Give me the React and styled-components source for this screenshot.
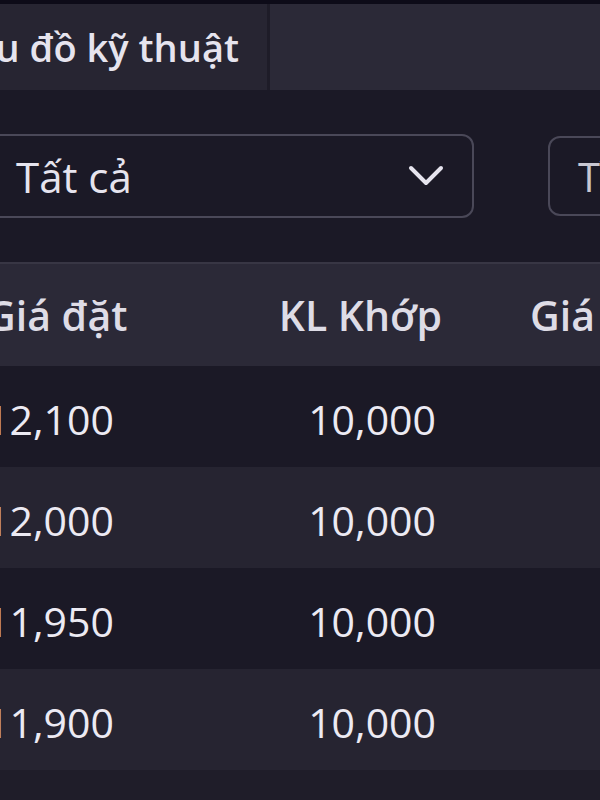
import React from "react";
import styled, { createGlobalStyle } from "styled-components";

const GlobalStyle = createGlobalStyle`
  html, body {
    margin: 0;
    padding: 0;
    background: #1f1d29;
    overflow: hidden;
  }
  * { box-sizing: border-box; }
`;

const Page = styled.div`
  width: 600px;
  height: 800px;
  overflow: hidden;
  background: #1f1d29;
  font-family: "Open Sans", "Noto Sans", sans-serif;
  color: #e9e7f0;
`;

const Shift = styled.div`
  margin-left: -100px;
  width: 780px;
`;

const TabBar = styled.div`
  display: flex;
  height: 90px;
  border-top: 4px solid #0d0b18;
  background: #2b2937;
`;

const Tab = styled.div`
  display: flex;
  align-items: center;
  padding: 0 28px 0 38px;
  font-size: 38px;
  font-weight: 600;
  color: ${(p) => (p.$active ? "#e6e4ee" : "#9d9aab")};
  background: ${(p) => (p.$active ? "#272532" : "transparent")};
  border-right: 3px solid #1e1c28;
  white-space: nowrap;
`;

const FilterBar = styled.div`
  display: flex;
  align-items: center;
  gap: 74px;
  height: 174px;
  padding-left: 80px;
  background: #1b1926;
  border-bottom: 2px solid #383644;
`;

const Select = styled.div`
  display: flex;
  align-items: center;
  justify-content: space-between;
  width: 494px;
  height: 84px;
  padding: 0 28px 0 34px;
  border: 2px solid #4a4858;
  border-radius: 12px;
  font-size: 42px;
  color: #e6e4ee;
  flex: none;
`;

const InputBox = styled.div`
  display: flex;
  align-items: center;
  width: 240px;
  height: 80px;
  padding-left: 28px;
  border: 2px solid #4a4858;
  border-radius: 12px;
  font-size: 40px;
  color: #c9c7d2;
  white-space: nowrap;
  overflow: hidden;
  flex: none;
`;

const Row = styled.div`
  display: grid;
  grid-template-columns: 254px 202px 1fr;
  align-items: center;
  height: ${(p) => (p.$header ? "102px" : "101px")};
  padding-left: 86px;
  background: ${(p) =>
    p.$header ? "#2b2937" : p.$alt ? "#262431" : "#1b1926"};
  font-size: ${(p) => (p.$header ? "41px" : "41px")};
  font-weight: ${(p) => (p.$header ? 600 : 400)};
  color: ${(p) => (p.$header ? "#dedce6" : "#eceaf3")};
  white-space: nowrap;
`;

const Cell = styled.div`
  text-align: ${(p) => (p.$right ? "right" : "left")};
  padding-left: ${(p) => (p.$pad ? `${p.$pad}px` : "0")};
  padding-right: ${(p) => (p.$right && !p.$header ? "6px" : "0")};
  padding-top: ${(p) => (p.$header ? "0" : "4px")};
`;

const Chevron = () => (
  <svg width="36" height="22" viewBox="0 0 36 22" fill="none">
    <polyline
      points="3,3 18,18 33,3"
      stroke="#e6e4ee"
      strokeWidth="4"
      strokeLinecap="round"
      strokeLinejoin="round"
    />
  </svg>
);

const rows = [
  { price: "12,100", qty: "10,000" },
  { price: "12,000", qty: "10,000" },
  { price: "11,950", qty: "10,000" },
  { price: "11,900", qty: "10,000" },
];

export default function App() {
  return (
    <Page>
      <GlobalStyle />
      <Shift>
        <TabBar>
          <Tab $active>Biểu đồ kỹ thuật</Tab>
        </TabBar>
        <FilterBar>
          <Select>
            <span>Tất cả</span>
            <Chevron />
          </Select>
          <InputBox>Tìm mã CK</InputBox>
        </FilterBar>
        <Row $header>
          <Cell $header>Giá đặt</Cell>
          <Cell $header $right>KL Khớp</Cell>
          <Cell $header $pad={88}>Giá khớp</Cell>
        </Row>
        {rows.map((r, i) => (
          <Row key={i} $alt={i % 2 === 1}>
            <Cell>{r.price}</Cell>
            <Cell $right>{r.qty}</Cell>
            <Cell $pad={88}></Cell>
          </Row>
        ))}
      </Shift>
    </Page>
  );
}
